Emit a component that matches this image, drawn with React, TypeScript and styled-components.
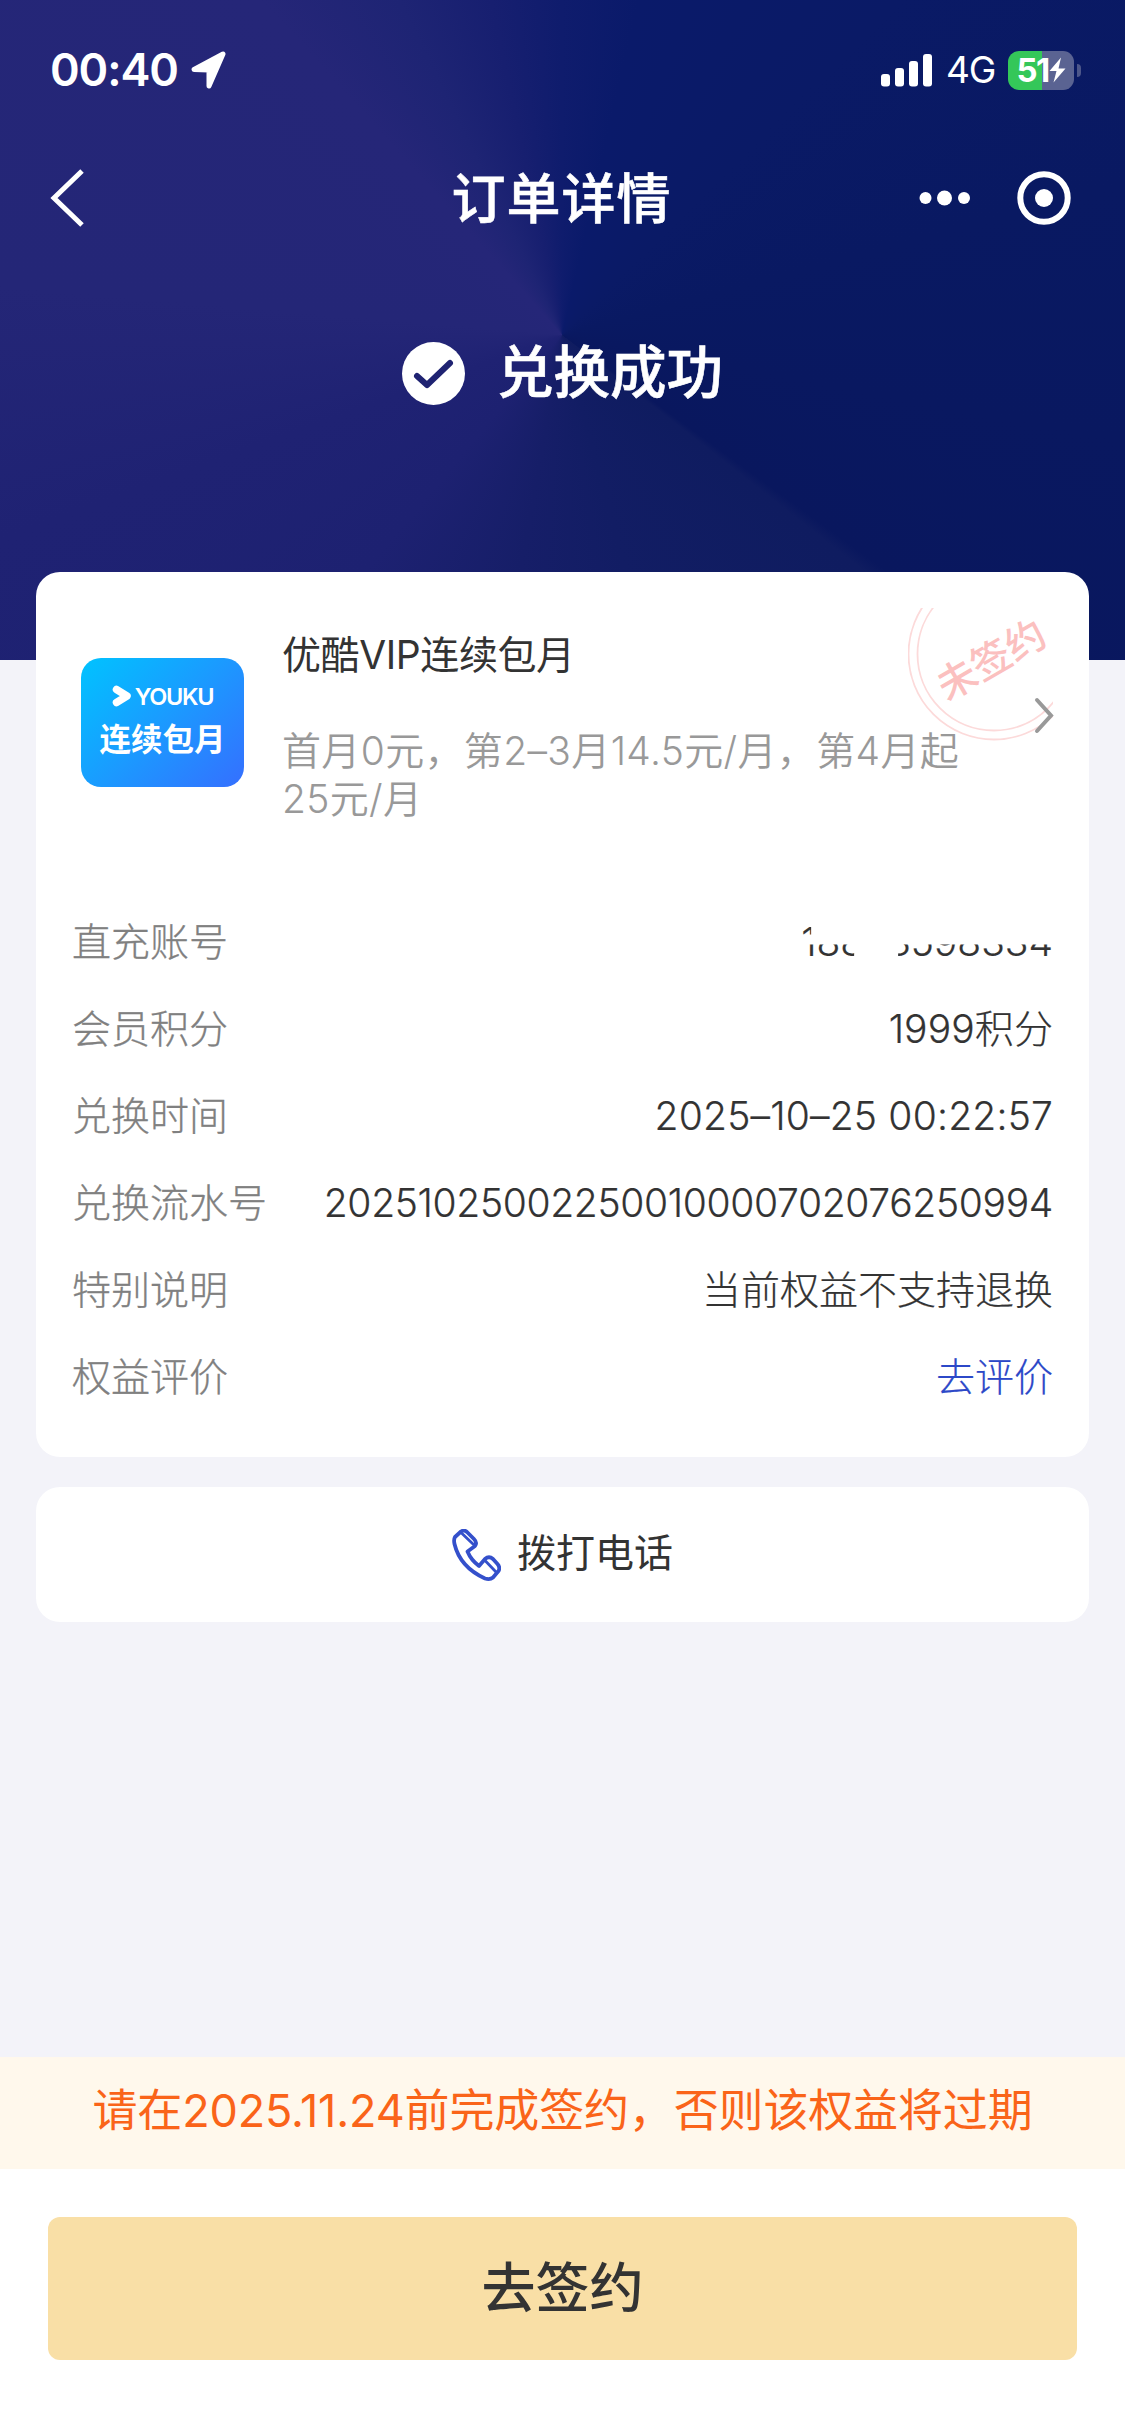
import React from "react";
import styled, { createGlobalStyle } from "styled-components";

const Global = createGlobalStyle`
  * { box-sizing: border-box; }
  body { margin: 0; background: #f3f3f9; }
`;

const Page = styled.div`
  display: flex;
  flex-direction: column;
  width: 1125px;
  height: 2436px;
  overflow: hidden;
  background: #f3f3f9;
  color: #333;
  font-family: Inter, "Noto Sans CJK SC", sans-serif;
`;

const Hero = styled.header`
  flex: none;
  height: 660px;
  color: #fff;
  background: conic-gradient(
    from 0deg at 562px 335px,
    #0f1c6d 0deg, #0a1a6a 13deg, #0a1a66 45deg, #091962 75deg, #09175e 126deg,
    #0f1c60 128deg, #121d64 165deg, #161e68 190deg, #1d2171 220deg,
    #1f2273 250deg, #242677 275deg, #252678 318deg, #1e2474 334deg, #171f70 348deg, #0f1c6d 360deg
  );
`;

const StatusBar = styled.div`
  display: flex;
  align-items: center;
  height: 140px;
  padding: 0 44px 0 50px;
`;

const Clock = styled.span`
  font-size: 45px;
  font-weight: 600;
  line-height: 56px;
  letter-spacing: -1.1px;
  width: 141px;
  white-space: nowrap;
`;

const StatusIcons = styled.div`
  display: flex;
  align-items: center;
  margin-left: auto;
`;

const Network = styled.span`
  width: 62px;
  margin-left: 13px;
  font-size: 37px;
  line-height: 44px;
  letter-spacing: -1.2px;
  white-space: nowrap;
`;

const Battery = styled.div`
  display: flex;
  align-items: center;
  justify-content: center;
  width: 66px;
  height: 39px;
  border-radius: 11px;
  background: linear-gradient(90deg, #34c759 52%, #5a6392 52%);
  font-size: 33px;
  font-weight: 700;
  letter-spacing: -1.6px;
`;

const BatteryCap = styled.div`
  width: 4px;
  height: 13px;
  margin-left: 3px;
  border-radius: 0 4px 4px 0;
  background: #4d578a;
`;

const NavBar = styled.nav`
  display: grid;
  grid-template-columns: 1fr auto 1fr;
  align-items: center;
  height: 116px;
  padding: 0 54px 0 50px;
`;

const NavTitle = styled.h1`
  margin: 0;
  padding: 4px 0 0 2px;
  font-size: 54px;
  font-weight: 500;
  line-height: 80px;
  letter-spacing: 1px;
  -webkit-text-stroke: 0.6px currentColor;
`;

const NavActions = styled.div`
  display: flex;
  align-items: center;
  justify-content: flex-end;
  gap: 46px;
`;

const Result = styled.div`
  display: flex;
  align-items: center;
  justify-content: center;
  gap: 32px;
  height: 80px;
  margin-top: 77px;
  font-size: 56.5px;
  font-weight: 500;
`;

const ResultText = styled.span`
  line-height: 80px;
  -webkit-text-stroke: 0.6px currentColor;
`;

const Card = styled.section`
  flex: none;
  margin: 0 36px;
  border-radius: 24px;
  background: #fff;
`;

const OrderCard = styled(Card)`
  height: 885px;
  margin-top: -88px;
  padding: 36px;
`;

const Product = styled.div`
  display: flex;
  position: relative;
  height: 290px;
`;

const Cover = styled.div`
  display: flex;
  flex-direction: column;
  align-items: center;
  width: 163px;
  height: 129px;
  margin: 50px 0 0 9px;
  padding-top: 24px;
  border-radius: 20px;
  background: linear-gradient(135deg, #00c3ff 0%, #1b9aff 50%, #356fff 100%);
  color: #fff;
`;

const Brand = styled.div`
  display: flex;
  align-items: center;
  gap: 3px;
  height: 28px;
  font-size: 23.5px;
  font-weight: 600;
  letter-spacing: -1.3px;
`;

const CoverTitle = styled.div`
  margin-top: 7px;
  font-size: 31.5px;
  font-weight: 700;
  line-height: 46px;
`;

const ProductText = styled.div`
  width: 700px;
  margin: 19px 0 0 38px;
`;

const ProductName = styled.h2`
  margin: 0;
  font-size: 39px;
  font-weight: 400;
  line-height: 56px;
  letter-spacing: -0.4px;
`;

const ProductNote = styled.p`
  margin: 44px 0 0;
  color: #999;
  font-size: 39px;
  font-weight: 350;
  line-height: 48px;
  letter-spacing: 0.35px;
  white-space: nowrap;
`;

const Stamp = styled.div`
  position: absolute;
  top: 0;
  right: 0;
  width: 145px;
  height: 133px;
`;

const StampRing = styled.svg`
  display: block;
`;

const StampText = styled.span`
  position: absolute;
  top: 25px;
  left: 24px;
  color: #fbc0bf;
  font-size: 39.5px;
  font-weight: 500;
  line-height: 54px;
  white-space: nowrap;
  transform: rotate(-30deg);
`;

const Arrow = styled.svg`
  position: absolute;
  top: 89px;
  right: -1px;
`;

const Row = styled.div`
  display: flex;
  justify-content: space-between;
  align-items: center;
  height: 87px;
  font-size: 39px;
  font-weight: 300;
  line-height: 58px;
  white-space: nowrap;
`;

const Label = styled.span`
  color: #808080;
  -webkit-text-stroke: 0.3px currentColor;
`;

const Value = styled.span<{ $link?: boolean; $spacing?: number }>`
  color: ${(p) => (p.$link ? "#2c48c8" : "#333")};
  letter-spacing: ${(p) => p.$spacing ?? 0}px;
  -webkit-text-stroke: 0.2px currentColor;
`;

const MaskedValue = styled(Value)`
  line-height: 48px;
  word-spacing: 12px;
  clip-path: polygon(
    0 0, 10px 0, 10px 17px, 0 17px, 0 27px, 53px 27px, 53px 100%, 97px 100%,
    97px 27px, 100% 27px, 100% 100%, 0 100%
  );
`;

const CallCard = styled(Card)`
  display: flex;
  align-items: center;
  justify-content: center;
  gap: 16px;
  height: 135px;
  margin-top: 30px;
  font-size: 39px;
`;

const CallText = styled.span`
  line-height: 58px;
  padding-bottom: 4px;
`;

const Notice = styled.div`
  flex: none;
  display: flex;
  align-items: center;
  justify-content: center;
  height: 112px;
  margin-top: auto;
  padding-bottom: 12px;
  background: #fff8ec;
  color: #fa6419;
  font-size: 45px;
  letter-spacing: -0.15px;
  white-space: nowrap;
`;

const Footer = styled.footer`
  flex: none;
  height: 267px;
  padding: 48px;
  background: #fff;
`;

const SignButton = styled.button`
  display: block;
  width: 100%;
  height: 143px;
  padding: 0;
  border: 0;
  border-radius: 12px;
  background: #f9dfa6;
  color: #333;
  font: 500 54px/143px Inter, "Noto Sans CJK SC", sans-serif;
`;

const rows = [
  { label: "会员积分", value: "1999积分", spacing: 0.1 },
  { label: "兑换时间", value: "2025–10–25 00:22:57", spacing: 0.2 },
  { label: "兑换流水号", value: "20251025002250010000702076250994", spacing: -0.33 },
  { label: "特别说明", value: "当前权益不支持退换" },
  { label: "权益评价", value: "去评价", link: true },
];

export default function App() {
  return (
    <Page>
      <Global />
      <Hero>
        <StatusBar>
          <Clock>00:40</Clock>
          <svg width="36" height="38" viewBox="0 0 36 38">
            <path d="M32 3 L18 35 L18 19 L3 18.5 Z" fill="#fff" stroke="#fff" strokeWidth="5" strokeLinejoin="round" />
          </svg>
          <StatusIcons>
            <svg width="52" height="34" viewBox="0 0 52 34" fill="#fff">
              <rect x="0" y="21" width="9" height="12.5" rx="3" />
              <rect x="14" y="15" width="9" height="18.5" rx="3" />
              <rect x="28" y="8" width="9" height="25.5" rx="3" />
              <rect x="42" y="1" width="9" height="32.5" rx="3" />
            </svg>
            <Network>4G</Network>
            <Battery>
              51
              <svg width="17" height="26" viewBox="0 0 17 26">
                <path d="M12 0.5 L0.5 14 H7.5 L4.5 25.5 L16.5 11.5 H9.5 Z" fill="#fff" />
              </svg>
            </Battery>
            <BatteryCap />
          </StatusIcons>
        </StatusBar>
        <NavBar>
          <svg width="36" height="58" viewBox="0 0 36 58">
            <path d="M32 2 L4 29 L32 56" fill="none" stroke="#fff" strokeWidth="5" />
          </svg>
          <NavTitle>订单详情</NavTitle>
          <NavActions>
            <svg width="52" height="16" viewBox="0 0 52 16" fill="#fff">
              <circle cx="6.5" cy="8" r="6" />
              <circle cx="25.5" cy="8" r="7.5" />
              <circle cx="45" cy="8" r="6" />
            </svg>
            <svg width="54" height="54" viewBox="0 0 54 54">
              <circle cx="27" cy="27" r="23.7" fill="none" stroke="#fff" strokeWidth="6" />
              <circle cx="27" cy="27" r="9" fill="#fff" />
            </svg>
          </NavActions>
        </NavBar>
        <Result>
          <svg width="63" height="63" viewBox="0 0 63 63">
            <circle cx="31.5" cy="31.5" r="31.5" fill="#fff" />
            <path d="M15 34 L25 43 L48 21" fill="none" stroke="#1f2372" strokeWidth="6" strokeLinecap="round" strokeLinejoin="round" />
          </svg>
          <ResultText>兑换成功</ResultText>
        </Result>
      </Hero>

      <OrderCard>
        <Product>
          <Cover>
            <Brand>
              <svg width="20" height="22" viewBox="0 0 20 22">
                <path d="M4.5 4.5 L15 11 L4.5 17.5" fill="none" stroke="#fff" strokeWidth="7.5" strokeLinecap="round" strokeLinejoin="round" />
              </svg>
              YOUKU
            </Brand>
            <CoverTitle>连续包月</CoverTitle>
          </Cover>
          <ProductText>
            <ProductName>优酷VIP连续包月</ProductName>
            <ProductNote>
              首月0元，第2–3月14.5元/月，第4月起
              <br />
              25元/月
            </ProductNote>
          </ProductText>
          <Stamp>
            <StampRing width="145" height="133" viewBox="0 0 145 133" fill="none" stroke="#fcdada" strokeWidth="1.8">
              <circle cx="86" cy="46" r="85.5" />
              <circle cx="86" cy="46" r="76.5" />
            </StampRing>
            <StampText>未签约</StampText>
          </Stamp>
          <Arrow width="20" height="38" viewBox="0 0 20 38">
            <path d="M3 3 L17 18.5 L3 34" fill="none" stroke="#999" strokeWidth="4" strokeLinecap="round" />
          </Arrow>
        </Product>
        <Row>
          <Label>直充账号</Label>
          <MaskedValue>188 3598334</MaskedValue>
        </Row>
        {rows.map((r) => (
          <Row key={r.label}>
            <Label>{r.label}</Label>
            <Value $link={r.link} $spacing={r.spacing}>
              {r.value}
            </Value>
          </Row>
        ))}
      </OrderCard>

      <CallCard>
        <svg width="49" height="52" viewBox="0 0 49 52" fill="none" stroke="#3450cb" strokeWidth="3.8" strokeLinejoin="round" strokeLinecap="round">
          <path d="M3 8 L9 2.500 Q12 0.5 15 3 L22 10 Q25.500 13.500 23 17 L15.500 22.500 Q19 31 27 37 L33 30 Q37 26.500 41 30 L45.500 35 Q48.500 38.500 46.500 42 L41 48.500 Q38 51 33 49.500 Q8 38 2.500 15 Q1.500 10.500 3 8 Z" />
          <path d="M10 4.500 L21.500 15.500 M33 31.500 L44 43" strokeWidth="2.8" />
        </svg>
        <CallText>拨打电话</CallText>
      </CallCard>

      <Notice>请在2025.11.24前完成签约，否则该权益将过期</Notice>
      <Footer>
        <SignButton>去签约</SignButton>
      </Footer>
    </Page>
  );
}
